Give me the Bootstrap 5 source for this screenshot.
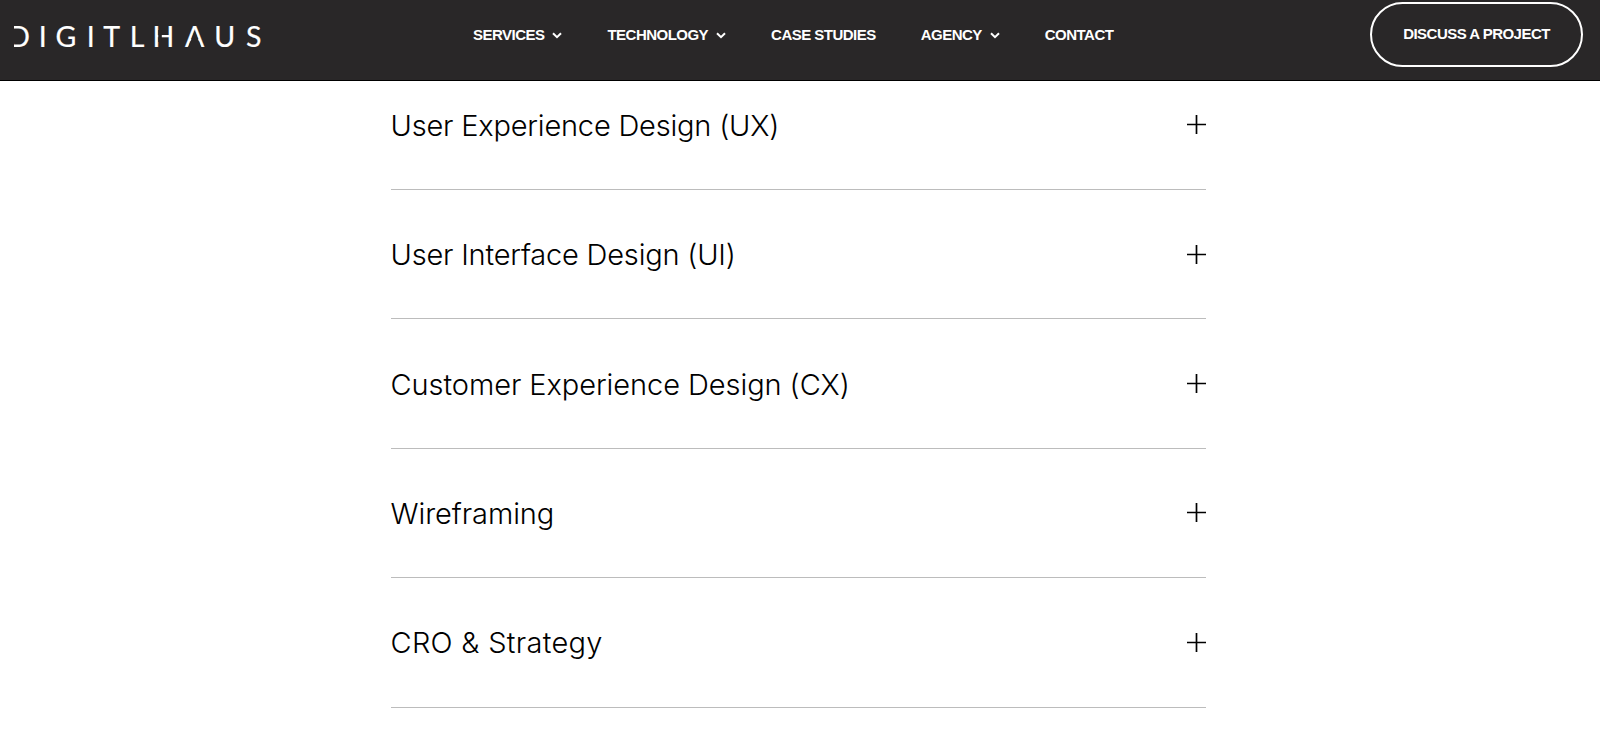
<!DOCTYPE html>
<html lang="en">
<head>
    <meta charset="utf-8">
    <meta name="viewport" content="width=device-width, initial-scale=1">
    <title>Digitlhaus</title>
    <link href="https://cdn.jsdelivr.net/npm/bootstrap@5.3.0/dist/css/bootstrap.min.css" rel="stylesheet">
    <style>
        body {
            font-family: Inter, "Liberation Sans", sans-serif;
            color: #000;
            overflow: hidden;
        }

        .site-header {
            height: 81px;
            padding: 0 17px 0 0;
            background: #292728;
            border-bottom: 1px solid #000;
            align-items: flex-start;
            font: bold 15px/20px "Liberation Sans", sans-serif;
            letter-spacing: -0.52px;
        }

        .brand-logo {
            width: 473px;
            height: 80px;
        }

        .brand-logo text {
            font: 400 28.5px Lato, sans-serif;
            letter-spacing: 0;
            text-anchor: middle;
            fill: #fff;
            stroke: #fff;
            stroke-width: 0.2px;
        }

        .main-menu {
            gap: 45px;
            padding-top: 25px;
        }

        .site-header .main-menu .nav-link {
            padding: 0;
            color: #fff;
            white-space: nowrap;
        }

        .chevron {
            width: 10px;
            height: 7px;
            margin-left: 8px;
        }

        .project-btn {
            width: 213px;
            height: 65px;
            margin-top: 2px;
            padding-bottom: 8px;
            border: 2px solid #fff;
            border-radius: 33px;
            color: #fff;
            font: inherit;
            letter-spacing: -0.52px;
        }

        .service-list {
            width: 815px;
            margin-left: 390.5px;
            padding-top: 60.6px;
        }

        .service-row {
            height: 129.4px;
            border-bottom: 1px solid #bcbcbc;
        }

        .service-toggle {
            padding: 0;
            border: 0;
            background: none;
            color: #000;
            font-size: 29px;
            font-weight: 300;
            line-height: 40px;
        }

        .service-toggle span {
            padding-top: 2px;
            letter-spacing: -0.07px;
        }

        .service-toggle .text-snug {
            letter-spacing: -0.2px;
        }

        .service-toggle .text-airy {
            letter-spacing: 0.3px;
        }

        .plus-icon {
            width: 19px;
            height: 19px;
        }
    </style>
</head>
<body>
    <header class="site-header navbar navbar-expand fixed-top">
        <a href="#" aria-label="Digitlhaus">
            <svg class="brand-logo d-block" viewBox="0 0 473 80">
                <text x="19 42.7 66 90.7 111.7 137 163.5 194.7 224.8 253.8" y="46.5">DIGITLHAUS</text>
                <!-- cut-outs in the wordmark -->
                <g fill="#292728">
                    <rect x="6" y="22" width="8" height="28"/>
                    <rect x="8" y="29" width="9" height="14.5"/>
                    <rect x="158.2" y="30" width="3.6" height="12"/>
                    <path d="M194.7 30.5l6.4 16.5h-12.8z"/>
                </g>
            </svg>
        </a>
        <ul class="main-menu navbar-nav">
            <li class="nav-item"><a class="nav-link d-flex align-items-center" href="#"><span>SERVICES</span><svg class="chevron" viewBox="0 0 10 7"><path d="M1 1.2l4 4 4-4" fill="none" stroke="#fff" stroke-width="2"/></svg></a></li>
            <li class="nav-item"><a class="nav-link d-flex align-items-center" href="#"><span>TECHNOLOGY</span><svg class="chevron" viewBox="0 0 10 7"><path d="M1 1.2l4 4 4-4" fill="none" stroke="#fff" stroke-width="2"/></svg></a></li>
            <li class="nav-item"><a class="nav-link" href="#">CASE STUDIES</a></li>
            <li class="nav-item"><a class="nav-link d-flex align-items-center" href="#"><span>AGENCY</span><svg class="chevron" viewBox="0 0 10 7"><path d="M1 1.2l4 4 4-4" fill="none" stroke="#fff" stroke-width="2"/></svg></a></li>
            <li class="nav-item"><a class="nav-link" href="#">CONTACT</a></li>
        </ul>
        <a class="project-btn btn d-flex align-items-center justify-content-center ms-auto" href="#">DISCUSS A PROJECT</a>
    </header>

    <main class="service-list">
        <div class="service-row d-flex align-items-center">
            <button class="service-toggle d-flex align-items-center justify-content-between w-100" type="button"><span class="text-snug">User Experience Design (UX)</span><svg class="plus-icon" viewBox="0 0 19 19"><path d="M9.5 0v19M0 9.5h19" stroke="#000" stroke-width="1.7"/></svg></button>
        </div>
        <div class="service-row d-flex align-items-center">
            <button class="service-toggle d-flex align-items-center justify-content-between w-100" type="button"><span class="text-snug">User Interface Design (UI)</span><svg class="plus-icon" viewBox="0 0 19 19"><path d="M9.5 0v19M0 9.5h19" stroke="#000" stroke-width="1.7"/></svg></button>
        </div>
        <div class="service-row d-flex align-items-center">
            <button class="service-toggle d-flex align-items-center justify-content-between w-100" type="button"><span>Customer Experience Design (CX)</span><svg class="plus-icon" viewBox="0 0 19 19"><path d="M9.5 0v19M0 9.5h19" stroke="#000" stroke-width="1.7"/></svg></button>
        </div>
        <div class="service-row d-flex align-items-center">
            <button class="service-toggle d-flex align-items-center justify-content-between w-100" type="button"><span>Wireframing</span><svg class="plus-icon" viewBox="0 0 19 19"><path d="M9.5 0v19M0 9.5h19" stroke="#000" stroke-width="1.7"/></svg></button>
        </div>
        <div class="service-row d-flex align-items-center">
            <button class="service-toggle d-flex align-items-center justify-content-between w-100" type="button"><span class="text-airy">CRO &amp; Strategy</span><svg class="plus-icon" viewBox="0 0 19 19"><path d="M9.5 0v19M0 9.5h19" stroke="#000" stroke-width="1.7"/></svg></button>
        </div>
    </main>

    <script src="https://cdn.jsdelivr.net/npm/bootstrap@5.3.0/dist/js/bootstrap.bundle.min.js"></script>
</body>
</html>
